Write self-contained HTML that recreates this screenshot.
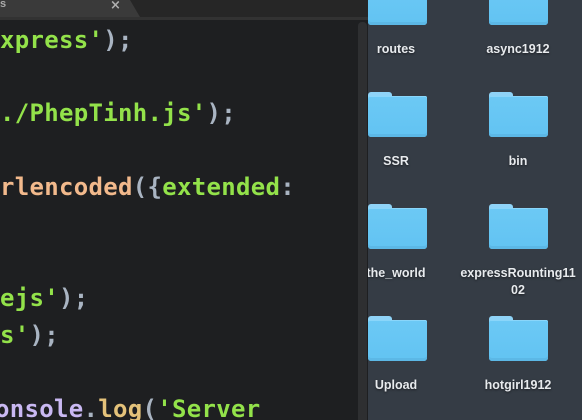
<!DOCTYPE html>
<html><head><style>
*{margin:0;padding:0;box-sizing:border-box}
html,body{width:582px;height:420px;overflow:hidden}
body{background:#1e1f21;position:relative;font-family:"DejaVu Sans Mono","Liberation Mono",monospace}
.tabbar{position:absolute;left:0;top:0;width:368px;height:17px;background:#262626}
.tabline{position:absolute;left:0;top:17px;width:368px;height:3px;background:#323232}
.tab{position:absolute;left:0;top:0;width:140px;height:17px;background:#3a3a3a;clip-path:polygon(0 0,130px 0,140px 17px,0 17px)}
.code{position:absolute;font-size:24px;font-weight:bold;letter-spacing:0.3px;white-space:pre;line-height:30px;height:30px}
.g{color:#93e24a}.p{color:#a9b4c2}.o{color:#f2b98c}.y{color:#e4c27a}.l{color:#c9b8f2}
.sb{position:absolute;left:358px;top:22px;width:9px;height:398px;background:#2e2f31;border-radius:4px 4px 0 0}
.right{position:absolute;left:368px;top:0;width:214px;height:420px;background:#353c45;overflow:hidden}
.f{position:absolute;width:59px;height:45px}
.f .t{position:absolute;left:0;top:0;width:24px;height:8px;background:#8fd3f7;border-radius:3px 3px 0 0}
.f .b{position:absolute;left:0;top:4px;width:59px;height:41px;background:linear-gradient(#6cc9f5,#62c3f2);border-radius:2px 2px 3px 3px;box-shadow:inset 0 1px 0 #8ad6fa,inset 0 -3px 0 #5cb8e6}
.lb{position:absolute;font-family:"Liberation Sans",sans-serif;font-weight:bold;font-size:12.5px;color:#e8ebee;text-align:center;width:120px;line-height:17px;text-shadow:0 1px 2px rgba(0,0,0,.5)}
</style></head><body>
<div class="tabbar"></div><div class="tab"></div><div class="tabline"></div>
<div style="position:absolute;left:0;top:0;font:bold 11px 'Liberation Sans',sans-serif;color:#aaa;line-height:9px">s</div>
<div style="position:absolute;left:110px;top:-2px;font:bold 13px 'DejaVu Sans',sans-serif;color:#b0b0b0">×</div>
<div class="code" style="left:0;top:25px"><span class="g">xpress'</span><span class="p">);</span></div>
<div class="code" style="left:0;top:98px"><span class="g">./PhepTinh.js'</span><span class="p">);</span></div>
<div class="code" style="left:0;top:172px"><span class="o">rlencoded</span><span class="p">({</span><span class="g">extended</span><span class="p">:</span></div>
<div class="code" style="left:0;top:283px"><span class="g">ejs'</span><span class="p">);</span></div>
<div class="code" style="left:0;top:320px"><span class="g">s'</span><span class="p">);</span></div>
<div class="code" style="left:-5px;top:394px"><span class="l">onsole</span><span class="p">.</span><span class="y">log</span><span class="p">(</span><span class="g">'Server</span></div>
<div class="sb"></div>
<div class="right">
<div class="f" style="left:0;top:-20px"><div class="t"></div><div class="b"></div></div>
<div class="f" style="left:121px;top:-20px"><div class="t"></div><div class="b"></div></div>
<div class="lb" style="left:-32px;top:41px">routes</div>
<div class="lb" style="left:90px;top:41px">async1912</div>
<div class="f" style="left:0;top:92px"><div class="t"></div><div class="b"></div></div>
<div class="f" style="left:121px;top:92px"><div class="t"></div><div class="b"></div></div>
<div class="lb" style="left:-32px;top:153px">SSR</div>
<div class="lb" style="left:90px;top:153px">bin</div>
<div class="f" style="left:0;top:204px"><div class="t"></div><div class="b"></div></div>
<div class="f" style="left:121px;top:204px"><div class="t"></div><div class="b"></div></div>
<div class="lb" style="left:-32px;top:265px">the_world</div>
<div class="lb" style="left:90px;top:265px">expressRounting11<br>02</div>
<div class="f" style="left:0;top:316px"><div class="t"></div><div class="b"></div></div>
<div class="f" style="left:121px;top:316px"><div class="t"></div><div class="b"></div></div>
<div class="lb" style="left:-32px;top:377px">Upload</div>
<div class="lb" style="left:90px;top:377px">hotgirl1912</div>
</div>
</body></html>
